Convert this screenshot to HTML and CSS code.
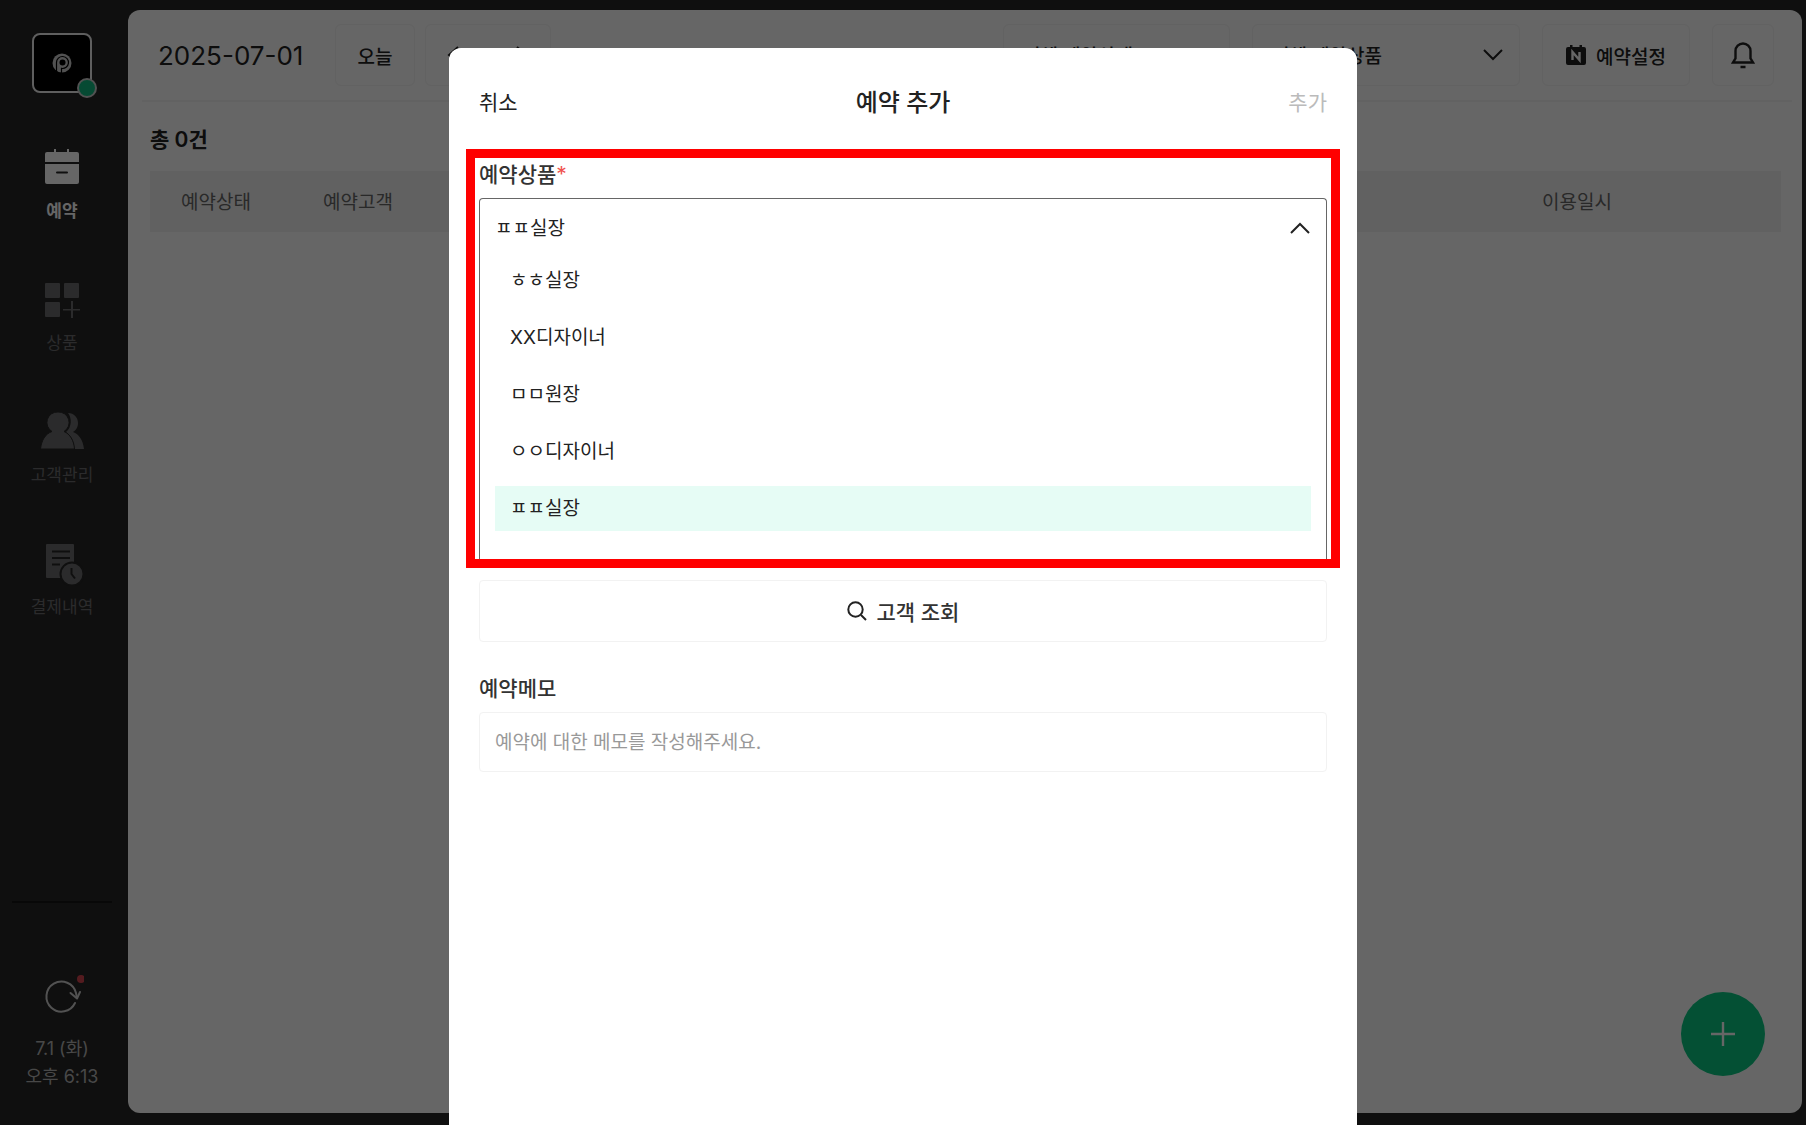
FILE: index.html
```html
<!DOCTYPE html>
<html lang="ko">
<head>
    <meta charset="UTF-8">
    <meta name="viewport" content="width=device-width, initial-scale=1.0">
    <title>예약 추가</title>
    <link rel="stylesheet" href="styles.css">
</head>
<body>
    <aside class="sidebar">
        <div class="logo">
            <svg width="20" height="20" viewBox="0 0 20 20" fill="none" stroke="#000">
                <circle cx="10" cy="10" r="9.500" fill="#ccc" stroke="none"/>
                <circle cx="10.500" cy="9.500" r="3" fill="#000" stroke="none"/>
                <path d="M4.500 20V9.500a6 6 0 1 1 5 5.900v4.600" stroke-width="1.200"/>
            </svg>
            <span class="status-dot"></span>
        </div>
        <nav class="menu">
            <a class="menu-item active" href="#">
                <svg width="44" height="44" viewBox="0 0 44 44" fill="currentColor">
                    <path d="M5 8a2 2 0 0 1 2-2h7V3h2v3h11V3h2v3h8a2 2 0 0 1 2 2v8H5zM5 18h34v18a2 2 0 0 1-2 2H7a2 2 0 0 1-2-2z"/>
                    <path d="M17 26.500h10" stroke="#262626" stroke-width="2" stroke-linecap="round"/>
                </svg>
                <span>예약</span>
            </a>
            <a class="menu-item" href="#">
                <svg width="44" height="44" viewBox="0 0 44 44" fill="currentColor">
                    <rect x="5" y="5" width="15" height="15" rx="1"/>
                    <rect x="24" y="5" width="15" height="15" rx="1"/>
                    <rect x="5" y="24" width="15" height="15" rx="1"/>
                    <path d="M31 23h2v8h7v1.600h-7V40h-2v-7.400h-8V31h8z"/>
                </svg>
                <span>상품</span>
            </a>
            <a class="menu-item" href="#">
                <svg width="44" height="44" viewBox="0 0 44 44" fill="currentColor">
                    <path d="M28 3c6 0 10 4.500 10 10 0 4-2 7.500-5 9 6 2 10 8 11 17H34c0-8-3-13-8-17 6-5 6-14 2-19z"/>
                    <path d="M18 2a10.500 10.500 0 0 1 6 19.500c6 2.500 10 9 10.500 17.500H0.500C1.500 30.500 5 24 12 21.500A10.500 10.500 0 0 1 18 2z" stroke="#262626"/>
                </svg>
                <span>고객관리</span>
            </a>
            <a class="menu-item" href="#">
                <svg width="44" height="44" viewBox="0 0 44 44" fill="currentColor">
                    <path d="M7 2h26a1 1 0 0 1 1 1v33H7a1 1 0 0 1-1-1V3a1 1 0 0 1 1-1z"/>
                    <path d="M12 9.500h18M12 16h18M12 22.500h8" stroke="#262626" stroke-width="2"/>
                    <circle cx="32" cy="32" r="11.500" stroke="#262626" stroke-width="2"/>
                    <path d="M31.500 26v6l3.500 4.500" stroke="#262626" stroke-width="2" fill="none"/>
                </svg>
                <span>결제내역</span>
            </a>
        </nav>
        <div class="sync">
            <button class="refresh" type="button" aria-label="새로고침">
                <svg width="44" height="44" viewBox="0 0 44 44" fill="none" stroke="#ccc" stroke-width="2" stroke-linecap="round" stroke-linejoin="round">
                    <path d="M35 28a15 15 0 1 1 1-10l1 5"/>
                    <path d="M30.500 18l6.500 5.500 3-6.500"/>
                    <circle cx="41" cy="4" r="4" fill="#d3444f" stroke="none"/>
                </svg>
            </button>
            <time>7.1 (화)<br>오후 6:13</time>
        </div>
    </aside>

    <main class="board">
        <header class="topbar">
            <h1 class="date">2025-07-01</h1>
            <button class="box today" type="button">오늘</button>
            <div class="box pager">
                <button type="button" aria-label="이전">
                    <svg width="20" height="20" viewBox="0 0 20 20" class="line"><path d="M11 2L2 10l9 8"/></svg>
                </button>
                <button type="button" aria-label="다음">
                    <svg width="20" height="20" viewBox="0 0 20 20" class="line"><path d="M8 2l9 8-9 8"/></svg>
                </button>
            </div>
            <div class="filters">
                <div class="box filter filter-status">
                    <select aria-label="예약상태"><option>전체 예약상태</option></select>
                    <svg width="20" height="12" viewBox="0 0 20 12" class="line"><path d="M1 1l9 9 9-9"/></svg>
                </div>
                <div class="box filter filter-product">
                    <select aria-label="예약상품"><option>전체 예약상품</option></select>
                    <svg width="20" height="12" viewBox="0 0 20 12" class="line"><path d="M1 1l9 9 9-9"/></svg>
                </div>
                <button class="box setting" type="button">
                    <svg width="20" height="22" viewBox="0 0 20 22">
                        <path d="M2 3h2V1h2.500v2h7V1H16v2h2a2 2 0 0 1 2 2v14a2 2 0 0 1-2 2H2a2 2 0 0 1-2-2V5a2 2 0 0 1 2-2z" fill="#222"/>
                        <path d="M6.500 16V8l7 8V8" fill="none" stroke="#fff" stroke-width="2.400"/>
                    </svg>
                    예약설정
                </button>
                <button class="box bell" type="button" aria-label="알림">
                    <svg width="24" height="28" viewBox="0 0 24 28" class="line bold">
                        <path d="M2 21.500h20l-2.500-4V10a7.500 7.500 0 0 0-15 0v7.500zM9.500 26h5"/>
                    </svg>
                </button>
            </div>
        </header>
        <h2 class="total">총 0건</h2>
        <table class="list">
            <colgroup><col class="col-status"><col><col class="col-time"></colgroup>
            <thead>
                <tr><th>예약상태</th><th>예약고객</th><th>이용일시</th></tr>
            </thead>
        </table>
        <button class="fab" type="button" aria-label="예약 추가">
            <svg width="26" height="26" viewBox="0 0 26 26"><path d="M13 1v24M1 13h24" stroke="#fff" stroke-width="2.400"/></svg>
        </button>
    </main>

    <div class="overlay">
        <form class="modal" role="dialog" aria-labelledby="modal-title">
            <header class="modal-head">
                <button type="button">취소</button>
                <h2 id="modal-title">예약 추가</h2>
                <button type="submit" disabled>추가</button>
            </header>

            <section class="highlight">
                <label class="label" for="product">예약상품<em>*</em></label>
                <div class="dropdown">
                    <div class="dropdown-value">
                        <select id="product">
                            <option>ㅎㅎ실장</option>
                            <option>XX디자이너</option>
                            <option>ㅁㅁ원장</option>
                            <option>ㅇㅇ디자이너</option>
                            <option selected>ㅍㅍ실장</option>
                        </select>
                        <svg width="20" height="12" viewBox="0 0 20 12" class="line"><path d="M1 11l9-9 9 9"/></svg>
                    </div>
                    <ul class="options" role="listbox" aria-label="예약상품">
                        <li role="option">ㅎㅎ실장</li>
                        <li role="option">XX디자이너</li>
                        <li role="option">ㅁㅁ원장</li>
                        <li role="option">ㅇㅇ디자이너</li>
                        <li role="option" class="selected" aria-selected="true">ㅍㅍ실장</li>
                    </ul>
                </div>
            </section>

            <button class="search" type="button">
                <svg width="20" height="20" viewBox="0 0 20 20" class="line"><circle cx="8.500" cy="8.500" r="7.200"/><path d="M14 14l5 5"/></svg>
                고객 조회
            </button>

            <label class="label memo-label" for="memo">예약메모</label>
            <input class="memo" id="memo" type="text" placeholder="예약에 대한 메모를 작성해주세요.">
        </form>
    </div>

    <script>
        const product = document.getElementById('product');
        const options = document.querySelectorAll('.options li');

        options.forEach((option, index) => {
            option.addEventListener('click', () => {
                product.selectedIndex = index;
                options.forEach((o) => {
                    o.classList.toggle('selected', o === option);
                    o.setAttribute('aria-selected', o === option);
                });
            });
        });
    </script>
</body>
</html>
```
FILE: styles.css
```css
* {
    box-sizing: border-box;
}
body {
    display: flex;
    min-height: 100vh;
    margin: 0;
    background-color: #262626;
    color: #222;
    font-family: Inter, "Noto Sans CJK KR", sans-serif;
    font-size: 19px;
}
h1, h2, ul {
    margin: 0;
    padding: 0;
}
button, select, input {
    margin: 0;
    padding: 0;
    border: 0;
    background: none;
    color: inherit;
    font: inherit;
}
button {
    cursor: pointer;
}
select {
    appearance: none;
    width: 100%;
    height: 100%;
}
svg {
    display: block;
    flex: none;
}
.line {
    fill: none;
    stroke: #222;
    stroke-width: 2;
}
.bold {
    stroke-width: 2.4;
}

/* sidebar */
.sidebar {
    display: flex;
    flex-direction: column;
    align-items: center;
    width: 124px;
    padding: 33px 12px 34px;
}
.logo {
    position: relative;
    display: grid;
    place-items: center;
    width: 60px;
    height: 60px;
    border: 2px solid #eee;
    border-radius: 8px;
    background-color: #000;
}
.status-dot {
    position: absolute;
    right: -7px;
    bottom: -7px;
    width: 20px;
    height: 20px;
    border: 2px solid #ccc;
    border-radius: 50%;
    background-color: #10b981;
}
.menu {
    display: flex;
    flex-direction: column;
    gap: 55px;
    margin-top: 53px;
}
.menu-item {
    display: flex;
    flex-direction: column;
    align-items: center;
    gap: 9px;
    color: #6c6c6e;
    font-size: 17px;
    line-height: 24px;
    text-decoration: none;
}
.menu-item.active {
    color: #fff;
    font-weight: 700;
}
.sync {
    display: flex;
    flex-direction: column;
    align-items: center;
    gap: 16px;
    width: 100%;
    margin-top: auto;
    padding-top: 72px;
    border-top: 2px solid #141414;
    color: #b4b4b4;
    font-size: 18px;
    line-height: 28px;
    text-align: center;
}

/* reservation list */
.board {
    position: relative;
    flex: 1;
    margin: 10px 4px 12px;
    border-radius: 12px;
    background-color: #fff;
}
.topbar {
    display: flex;
    align-items: center;
    height: 92px;
    margin: 0 10px 0 14px;
    padding: 0 18px 0 16px;
    border-bottom: 2px solid #f4f4f4;
}
.date {
    width: 177px;
    font-size: 26px;
    font-weight: 400;
}
.box {
    height: 62px;
    border: 1px solid #f4f4f4;
    border-radius: 6px;
    font-weight: 500;
}
.today {
    width: 80px;
}
.pager {
    display: flex;
    margin-left: 10px;
}
.pager button {
    display: grid;
    place-items: center;
    width: 62px;
}
.filters {
    display: flex;
    gap: 22px;
    margin-left: auto;
}
.filter {
    position: relative;
}
.filter select {
    padding: 2px 19px 0;
}
.filter svg {
    position: absolute;
    top: 24px;
    right: 16px;
}
.filter-status {
    width: 227px;
}
.filter-product {
    width: 268px;
}
.setting {
    display: flex;
    align-items: center;
    justify-content: center;
    gap: 10px;
    width: 148px;
}
.bell {
    display: grid;
    place-items: center;
    width: 62px;
}
.total {
    margin: 24px 22px 17px;
    font-size: 21px;
    font-weight: 600;
    line-height: 28px;
}
.list {
    width: calc(100% - 43px);
    margin-left: 22px;
    border-collapse: collapse;
    table-layout: fixed;
}
.list th {
    height: 61px;
    padding: 0 0 2px 31px;
    background-color: #f2f2f2;
    color: #666;
    font-weight: 400;
    text-align: left;
}
.col-status {
    width: 142px;
}
.col-time {
    width: 270px;
}
.fab {
    position: absolute;
    right: 37px;
    bottom: 37px;
    display: grid;
    place-items: center;
    width: 84px;
    height: 84px;
    border-radius: 50%;
    background-color: #0ac882;
}

/* add reservation dialog */
.overlay {
    position: fixed;
    inset: 0;
    display: flex;
    justify-content: center;
    padding-top: 48px;
    background-color: rgba(0, 0, 0, 0.6);
}
.modal {
    width: 908px;
    max-width: 100%;
    padding: 0 30px;
    border-radius: 12px 12px 0 0;
    background-color: #fff;
}
.modal-head {
    display: flex;
    align-items: center;
    justify-content: space-between;
    height: 101px;
    padding-top: 4px;
    font-size: 21px;
}
.modal-head h2 {
    font-size: 24px;
    font-weight: 500;
}
.modal-head button:disabled {
    color: #bbb;
}
.highlight {
    margin: 0 -13px;
    padding: 0 4px;
    border: 9px solid #f00;
}
.label {
    display: block;
    padding: 1px 0 7px;
    color: #333;
    font-size: 21px;
    font-weight: 500;
    line-height: 32px;
}
.label em {
    color: #f0524f;
    font-style: normal;
    font-weight: 400;
}
.dropdown {
    border: 1px solid #666;
    border-bottom: 0;
    border-radius: 4px 4px 0 0;
}
.dropdown-value {
    position: relative;
    height: 58px;
}
.dropdown-value select {
    padding: 0 15px;
}
.dropdown-value svg {
    position: absolute;
    top: 23px;
    right: 16px;
}
.options {
    display: grid;
    gap: 12px;
    padding: 1px 15px 28px;
    list-style: none;
}
.options li {
    padding: 0 15px;
    line-height: 45px;
    cursor: pointer;
}
.options .selected {
    background-color: #e6fcf5;
}
.search {
    display: flex;
    align-items: center;
    justify-content: center;
    gap: 10px;
    width: 100%;
    height: 62px;
    margin: 12px 0 30px;
    border: 1px solid #f2f2f2;
    border-radius: 4px;
    color: #333;
    font-size: 21px;
    font-weight: 500;
}
.memo {
    width: 100%;
    height: 60px;
    padding: 0 15px;
    border: 1px solid #f2f2f2;
    border-radius: 4px;
}
.memo::placeholder {
    color: #999;
}
```
